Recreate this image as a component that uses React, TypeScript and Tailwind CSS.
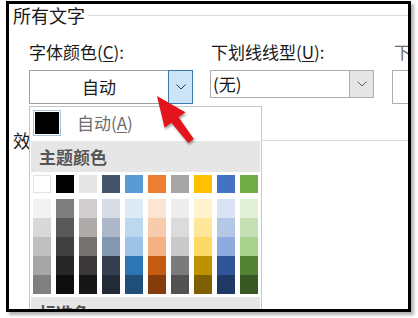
import React from 'react';

const font = "font-['Noto_Sans_CJK_SC','Noto_Sans',sans-serif]";

// Office theme colours: base colour on top, then five shades
const themeColumns: string[][] = [
  ['#ffffff', '#f2f2f2', '#d9d9d9', '#bfbfbf', '#a6a6a6', '#808080'],
  ['#000000', '#7f7f7f', '#595959', '#404040', '#262626', '#0d0d0d'],
  ['#e7e6e6', '#d0cece', '#aeaaaa', '#757171', '#3a3838', '#171616'],
  ['#44546a', '#d6dce4', '#adb9ca', '#8497b0', '#333f4f', '#222a35'],
  ['#5b9bd5', '#deebf6', '#bdd7ee', '#9dc3e6', '#2e75b5', '#1f4e79'],
  ['#ed7d31', '#fbe5d5', '#f8cbad', '#f4b183', '#c55a11', '#843c0b'],
  ['#a5a5a5', '#ededed', '#dbdbdb', '#c9c9c9', '#7b7b7b', '#525252'],
  ['#ffc000', '#fff2cc', '#ffe699', '#ffd966', '#bf9000', '#7f6000'],
  ['#4472c4', '#dae3f3', '#b4c7e7', '#8faadc', '#2f5597', '#203864'],
  ['#70ad47', '#e2f0d9', '#c5e0b4', '#a9d18e', '#548235', '#385723'],
];

function Chevron({ color }: { color: string }) {
  return (
    <svg width="10" height="6" viewBox="0 0 10 6" fill="none">
      <path d="M0.5 0.5 L5 5 L9.5 0.5" stroke={color} strokeWidth="1" />
    </svg>
  );
}

function ColorPanel() {
  return (
    <div className="absolute left-[20px] top-[102px] w-[233px] h-[220px] border border-[#c6c6c6] bg-white">
      {/* Automatic */}
      <div className="flex items-center pt-[3px] pl-[3px]">
        <div className="w-[28px] h-[26px] border border-[#a9c2dc] p-[1px] bg-white">
          <div className="w-full h-full bg-black" />
        </div>
        <span className="ml-[16px] text-[17px] leading-[20px] text-[#6d6d6d]">
          自动(<span className="underline underline-offset-2">A</span>)
        </span>
      </div>

      {/* Theme colours */}
      <div className="mt-[5px] mx-[1px] h-[31px] bg-[#e6e6e6] flex items-center pl-[8px]">
        <span className="font-bold text-[17px] leading-[20px] text-[#555555]">主题颜色</span>
      </div>

      <div className="mt-[3px] pl-[3px] flex gap-[5px]">
        {themeColumns.map((col, i) => (
          <div key={i} className="flex flex-col w-[18px]">
            <div
              className={i === 0 ? 'h-[18px] border border-[#e2e2e2]' : 'h-[18px]'}
              style={{ backgroundColor: col[0] }}
            />
            <div className="mt-[6px] flex flex-col">
              {col.slice(1).map((c, j) => (
                <div key={j} className="h-[19px]" style={{ backgroundColor: c }} />
              ))}
            </div>
          </div>
        ))}
      </div>

      {/* Standard colours */}
      <div className="mt-[3px] mx-[1px] h-[31px] bg-[#e6e6e6] flex items-center pl-[8px]">
        <span className="font-bold text-[17px] leading-[20px] text-[#555555]">标准色</span>
      </div>
    </div>
  );
}

export default function App() {
  return (
    <div className={`relative w-[418px] h-[318px] bg-white overflow-hidden pt-[1px] pl-[6px] ${font}`}>
      <div className="relative w-[405px] h-[311px] border-[3px] border-black bg-white overflow-hidden shadow-[3px_3px_3px_rgba(0,0,0,0.3)]">
        {/* Group: 所有文字 */}
        <div className="flex items-center h-[22px] pl-[4px]">
          <span className="text-[18px] leading-[22px] text-[#1a1a1a]">所有文字</span>
          <div className="flex-1 h-px bg-[#dcdcdc] ml-[3px]" />
        </div>

        <div className="flex items-start mt-[16px] pl-[20px] text-[17px] text-[#1a1a1a]">
          {/* Font colour */}
          <div className="w-[164px] shrink-0">
            <div className="h-[20px] leading-[20px]">
              字体颜色(<span className="underline underline-offset-2">C</span>):
            </div>
            <div className="mt-[8px] h-[34px] flex">
              <div className="flex-1 border border-r-0 border-[#a0a0a0] flex items-center justify-center">
                <span className="leading-[20px]">自动</span>
              </div>
              <div className="w-[25px] border border-[#3d7bad] bg-[#cce4f7] flex items-center justify-center">
                <Chevron color="#333333" />
              </div>
            </div>
          </div>

          {/* Underline style */}
          <div className="w-[164px] shrink-0 ml-[17px]">
            <div className="h-[20px] leading-[20px] pl-[1px]">
              下划线线型(<span className="underline underline-offset-2">U</span>):
            </div>
            <div className="mt-[8px] h-[28px] flex">
              <div className="flex-1 border border-r-0 border-[#adadad] flex items-center pl-[2px]">
                <span className="leading-[20px]">(无)</span>
              </div>
              <div className="w-[25px] border border-[#adadad] bg-[#e5e5e5] flex items-center justify-center">
                <Chevron color="#606060" />
              </div>
            </div>
          </div>

          {/* Underline colour (cut off) */}
          <div className="w-[140px] shrink-0 ml-[18px]">
            <div className="h-[20px] leading-[20px] pl-[2px] text-[#6d6d6d] whitespace-nowrap">
              下划线颜色(I):
            </div>
            <div className="mt-[8px] h-[34px] border border-[#adadad]" />
          </div>
        </div>

        {/* Group: 效果 */}
        <div className="flex items-center h-[22px] pl-[4px] mt-[25px]">
          <span className="text-[18px] leading-[22px] text-[#1a1a1a]">效果</span>
          <div className="flex-1 h-px bg-[#dcdcdc] ml-[3px]" />
        </div>

        <ColorPanel />
      </div>

      {/* Red annotation arrow */}
      <svg
        className="absolute left-0 top-0 pointer-events-none drop-shadow-[1px_2px_1px_rgba(0,0,0,0.35)]"
        width="418"
        height="318"
        viewBox="0 0 418 318"
      >
        <polygon
          points="157,96 185.4,112.2 178.6,117.3 193.8,138.9 188.2,143.1 171.4,122.7 164.6,127.8"
          fill="#e3141c"
        />
      </svg>
    </div>
  );
}
